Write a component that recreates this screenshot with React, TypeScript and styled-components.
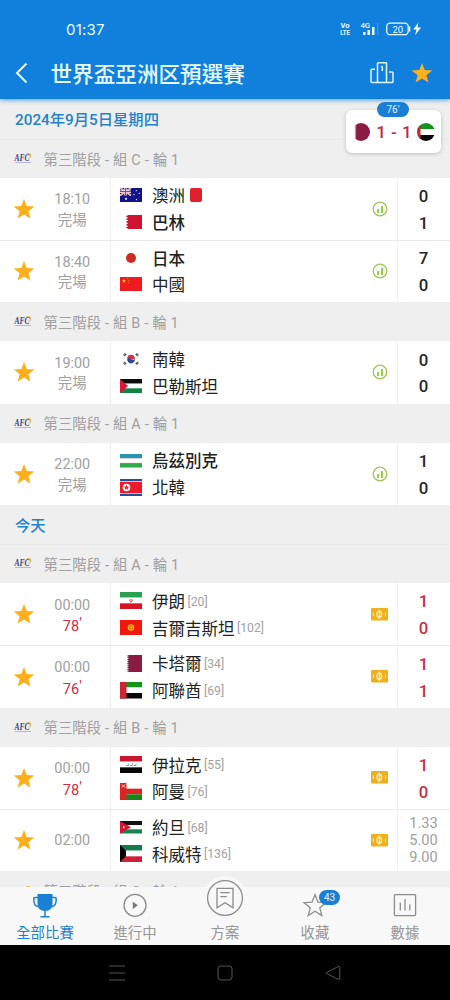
import React from "react";
import styled, { createGlobalStyle } from "styled-components";

const Global = createGlobalStyle`
  * { box-sizing: border-box; }
  body { margin: 0; background: #000; }
  svg { display: block; overflow: visible; flex: none; }
`;

const Screen = styled.div`
  position: relative;
  width: 450px;
  height: 1000px;
  display: flex;
  flex-direction: column;
  overflow: hidden;
  background: #efefef;
  font-family: Roboto, "Noto Sans CJK TC", sans-serif;
`;

const Header = styled.header`
  flex: none;
  height: 98.5px;
  display: flex;
  flex-direction: column;
  background: #1080dc;
  color: #e8fbff;
  box-shadow: 0 1px 5px rgba(16, 128, 220, 0.75);
  z-index: 1;
`;

const StatusBar = styled.div`
  height: 50px;
  padding: 8px 27px 0 66px;
  display: flex;
  align-items: center;
  justify-content: space-between;
  font: 500 15.5px Inter, sans-serif;
`;

const Clock = styled.span`
  font-size: 15px;
  font-weight: 400;
  letter-spacing: 0.2px;
`;

const TitleBar = styled.div`
  height: 48px;
  padding: 0 16px 2px 14px;
  display: flex;
  align-items: center;
`;

const Title = styled.h1`
  flex: 1;
  margin: 0 0 0 20.5px;
  font: 500 21.6px/30px "Noto Sans CJK TC", sans-serif;
  white-space: nowrap;
`;

const HeaderIcons = styled.div`
  display: flex;
  align-items: center;
  gap: 17px;
  padding-right: 1px;
`;

const List = styled.main`
  flex: none;
  height: 788.5px;
  overflow: hidden;
`;

const DateRow = styled.div<{ $h: number }>`
  height: ${(p) => p.$h}px;
  padding: 0 0 1px 15px;
  display: flex;
  align-items: center;
  border-bottom: 1px solid #e8e8e8;
  color: #2482cc;
  font-size: 15.3px;
  font-weight: 500;
`;

const GroupRow = styled.div<{ $h: number }>`
  height: ${(p) => p.$h}px;
  padding: 0 0 1px 14px;
  display: flex;
  align-items: center;
  gap: 11.5px;
  color: #a0a0a0;
  font-size: 14.4px;
  word-spacing: 0.4px;
  white-space: pre;
`;

const MatchRow = styled.div<{ $line?: boolean }>`
  height: 62.35px;
  display: flex;
  background: #fff;
  box-shadow: ${(p) => (p.$line ? "inset 0 1px 0 #e9e9e9" : "none")};
`;

const StarCell = styled.div`
  width: 48px;
  display: flex;
  align-items: center;
  justify-content: center;
`;

const TimeCell = styled.div<{ $single?: boolean }>`
  width: 62.5px;
  padding: ${(p) => (p.$single ? 1 : 4)}px 13px 0 0;
  display: flex;
  flex-direction: column;
  justify-content: center;
  align-items: center;
  border-right: 1px solid #ededed;
  color: #a0a0a0;
  font-size: 14.4px;
  line-height: 20.5px;
`;

const Live = styled.span`
  display: flex;
  color: #cf2c43;
  font-size: 14.6px;
  & > i { font-style: normal; line-height: 15px; }
`;

const Teams = styled.div`
  flex: 1;
  padding-left: 9.5px;
  display: flex;
  flex-direction: column;
  justify-content: center;
`;

const TeamLine = styled.div<{ $win?: boolean }>`
  height: 26.8px;
  display: flex;
  align-items: center;
  color: #222;
  font-size: 16.5px;
  line-height: 22px;
  font-weight: ${(p) => (p.$win ? 500 : 400)};
  white-space: nowrap;
`;

const TeamName = styled.span`
  padding-top: 4px;
`;

const FlagBox = styled.span`
  width: 22px;
  margin-right: 10px;
`;

const Rank = styled.span`
  margin-left: 2.5px;
  padding-top: 1.5px;
  color: #a2a2a2;
  font-size: 12.2px;
`;

const RedCard = styled.span`
  width: 12px;
  height: 14px;
  margin-left: 5px;
  border-radius: 2px;
  background: #e0202e;
`;

const IconCell = styled.div`
  width: 35px;
  display: flex;
  align-items: center;
  justify-content: center;
`;

const ScoreCell = styled.div<{ $live?: boolean; $odds?: boolean }>`
  width: 53px;
  padding: ${(p) => (p.$odds ? 0 : 2)}px 1px 0 0;
  display: flex;
  flex-direction: column;
  align-items: center;
  justify-content: center;
  border-left: 1px solid #f0f0f0;
  color: ${(p) => (p.$live ? "#c92f45" : p.$odds ? "#a0a0a0" : "#262626")};
  font-size: ${(p) => (p.$odds ? 14.6 : 16.8)}px;
  font-weight: ${(p) => (p.$odds ? 400 : 500)};
  line-height: ${(p) => (p.$odds ? 17 : 26.8)}px;
`;

const LiveCard = styled.aside`
  position: absolute;
  left: 346px;
  top: 110px;
  width: 95px;
  height: 43px;
  padding: 0 6px 0 7px;
  display: flex;
  align-items: center;
  justify-content: space-between;
  border-radius: 6px;
  background: #fff;
  box-shadow: 0 1px 4px rgba(0, 0, 0, 0.2);
  color: #c3273f;
  font-size: 17px;
  font-weight: 500;
  word-spacing: 1px;
  z-index: 2;
`;

const LiveBadge = styled.span`
  position: absolute;
  left: 31px;
  top: -8px;
  width: 32px;
  height: 15px;
  border-radius: 8px;
  background: #1a7fd4;
  color: #e6f4ff;
  font-size: 10px;
  font-weight: 400;
  line-height: 15px;
  text-align: center;
`;

const TabBar = styled.nav`
  flex: none;
  height: 58px;
  display: grid;
  grid-template-columns: repeat(5, 90px);
  background: #f8f8f8;
`;

const Tab = styled.div<{ $active?: boolean }>`
  position: relative;
  display: flex;
  flex-direction: column;
  align-items: center;
  padding-top: 6px;
  gap: 4.5px;
  color: ${(p) => (p.$active ? "#1a80d4" : "#979797")};
  font-size: 14.4px;
  line-height: 22px;
`;

const RaisedIcon = styled.div`
  width: 44px;
  height: 44px;
  margin: -17px 0 -2px;
  display: grid;
  place-items: center;
  border-radius: 50%;
  background: #f8f8f8;
`;

const CountBadge = styled.span`
  position: absolute;
  left: 49px;
  top: 3px;
  width: 21px;
  height: 15px;
  border-radius: 8px;
  background: #1a7fd4;
  color: #e6f4ff;
  font-size: 10px;
  line-height: 15px;
  text-align: center;
`;

const SystemBar = styled.footer`
  flex: none;
  height: 55px;
  display: flex;
  align-items: center;
  justify-content: center;
  gap: 92px;
  background: #000;
`;

const STAR = "M11 0.5l2.7 7.1 7.6.4-5.9 4.7 2 7.3L11 15.9 4.6 20l2-7.3L.7 8l7.6-.4z";

const Star = ({ size = 22 }: { size?: number }) => (
  <svg width={size} height={size} viewBox="0 0 22 21"><path d={STAR} fill="#fdb01c" /></svg>
);

const StatusIcons = () => (
  <svg width="83" height="18" viewBox="0 0 83 18" fill="none" stroke="#e8fbff">
    <g fill="#e8fbff" stroke="none" fontFamily="Roboto" fontWeight="700">
      <text x="0.5" y="7.8" fontSize="6.6" textLength="9" lengthAdjust="spacingAndGlyphs">Vo</text>
      <text x="0.3" y="14.8" fontSize="7" textLength="9.5" lengthAdjust="spacingAndGlyphs">LTE</text>
      <text x="20.5" y="8" fontSize="7.8" textLength="9.5" fontWeight="500">4G</text>
      <rect x="23" y="12" width="2.5" height="3" />
      <rect x="27.5" y="10" width="2.5" height="5" />
      <rect x="32" y="7" width="2.5" height="8" />
      <text x="52.5" y="12.5" fontSize="9.5" fontWeight="400">20</text>
      <path d="M78.3 2.5l-5 7h3.2l-1.4 5.7 6-7.6h-3.5z" />
      <path d="M69 6.5h1.3v5H69z" />
    </g>
    <path d="M37.8 3v12" opacity=".25" />
    <rect x="46.7" y="3.2" width="21.5" height="11.5" rx="3.5" strokeWidth="1.3" />
  </svg>
);

const BackIcon = () => (
  <svg width="16" height="22" viewBox="0 0 16 22" fill="none" stroke="#e8fbff" strokeWidth="2"><path d="M12.5 1.5L3 11l9.5 9.5" /></svg>
);

const PodiumIcon = () => (
  <svg width="24" height="22" viewBox="0 0 24 22" fill="none" stroke="#dff5ff" strokeWidth="1.5" strokeLinejoin="round">
    <path d="M7.5 20.5V1.5q0-.7.7-.7h7.6q.7 0 .7.7v19M5 7.3H2q-1 0-1 1v11.2q0 1 1 1h20q1 0 1-1V11q0-1-1-1h-3M11 5.2l1.3-.7v4.5" />
  </svg>
);

const AfcLogo = () => (
  <svg width="18" height="12" viewBox="0 0 18 12">
    <text x="0.5" y="9" fontFamily="Liberation Serif" fontStyle="italic" fontWeight="700" fontSize="9.5" fill="#3c3c83" textLength="15" lengthAdjust="spacingAndGlyphs">AFC</text>
    <path d="M12.7 1.7q3.7-.8 4.1 1.6.2 2.1-2.1 3.2" fill="none" stroke="#e8b95c" strokeWidth="1.2" />
    <path d="M1 10.5h16" stroke="#a9a9cf" strokeWidth=".8" />
  </svg>
);

const StatsIcon = () => (
  <svg width="16" height="16" viewBox="0 0 16 16">
    <circle cx="8" cy="8" r="6.8" fill="none" stroke="#9bc758" strokeWidth="1.3" />
    <path d="M6.1 8v4M10 5v7" stroke="#93cf3b" strokeWidth="2" />
  </svg>
);

const PitchIcon = () => (
  <svg width="17" height="13" viewBox="0 0 17 13">
    <rect width="17" height="12.5" rx="1" fill="#efb01f" />
    <ellipse cx="8.3" cy="6.3" rx="2.3" ry="3.1" fill="none" stroke="#fff3c9" strokeWidth="1.3" />
    <path d="M8.3 1.6v9.4M2.3 4.5v3.6M14.5 4.5v3.6" stroke="#fff3c9" strokeWidth="1" />
  </svg>
);

const starPath = (cx: number, cy: number, r: number) =>
  "M" + Array.from({ length: 10 }, (_, i) => {
    const a = -Math.PI / 2 + (i * Math.PI) / 5;
    const q = i % 2 ? r * 0.42 : r;
    return `${(cx + q * Math.cos(a)).toFixed(2)} ${(cy + q * Math.sin(a)).toFixed(2)}`;
  }).join("L") + "z";

const bands = (colors: string[], h: number) =>
  colors.map((c, i) => <rect key={i} y={(h / colors.length) * i} width="22" height={h / colors.length} fill={c} />);

const serrated = (x: number, h: number, n: number) => {
  let d = `M22 0H${x}`;
  for (let i = 0; i < n; i++) d += `L${x - 2.3} ${(h / n) * (i + 0.5)}L${x} ${(h / n) * (i + 1)}`;
  return d + "H22z";
};

const flags: Record<string, { h: number; art: React.ReactNode }> = {
  au: { h: 14, art: <>
    <rect width="22" height="14" fill="#12128c" />
    <path d="M0 0l11 7.5M11 0L0 7.5" stroke="#fff" strokeWidth="1.6" />
    <path d="M0 0l11 7.5M11 0L0 7.5" stroke="#d8304a" strokeWidth=".6" />
    <path d="M5.5 0v7.5M0 3.7h11" stroke="#fff" strokeWidth="2.4" />
    <path d="M5.5 0v7.5M0 3.7h11" stroke="#d8304a" strokeWidth="1.3" />
    <path d={starPath(6, 10.8, 1.7) + starPath(16.3, 2.7, 1) + starPath(19.3, 5.3, 1) + starPath(14, 6.5, 1) + starPath(16.5, 11.5, 1.1)} fill="#fff" />
  </> },
  bh: { h: 14, art: <path d={serrated(8.2, 14, 5)} fill="#cf1430" /> },
  jp: { h: 14, art: <circle cx="11" cy="7" r="5" fill="#d02b22" /> },
  cn: { h: 14, art: <>
    <rect width="22" height="14" fill="#ee1c20" />
    <path d={starPath(4, 4, 2.2) + starPath(7.8, 1.7, 0.8) + starPath(9, 3.5, 0.8) + starPath(8.5, 5.7, 0.8)} fill="#ffc928" />
  </> },
  kr: { h: 14, art: <>
    <path d="M7.3 7a3.8 3.8 0 0 1 7.4 0z" fill="#d13144" />
    <path d="M7.3 7a3.8 3.8 0 1 0 7.5 0q-2 2-3.8 0T7.3 7z" fill="#244b9b" />
    <path d="M7.2 6.6a3.8 3.8 0 0 1 7.6 0q-2 2-3.8.4t-3.8-.4z" fill="#d13144" />
    <path d="M4 3.8l2-2.4M18 3.8l-2-2.4M4 10.2l2 2.4M18 10.2l-2 2.4" stroke="#444" strokeWidth="2.4" strokeDasharray="1.1 .4" />
  </> },
  ps: { h: 14, art: <>{bands(["#0c0c0c", "#fff", "#118344"], 14)}<path d="M0 0l8 7-8 7z" fill="#d81738" /></> },
  uz: { h: 13.5, art: <>
    <rect width="22" height="4.3" fill="#2795af" /><rect y="9" width="22" height="4.5" fill="#2eaa4a" />
    <path d="M0 4.5h22M0 8.8h22" stroke="#f2c8cc" strokeWidth=".5" />
  </> },
  kp: { h: 17, art: <>
    <rect width="22" height="17" fill="#264f9b" /><rect y="2.3" width="22" height="12.4" fill="#fff" />
    <rect y="3" width="22" height="11" fill="#ed1c2a" /><circle cx="6.5" cy="8.5" r="3.8" fill="#fff" />
    <path d={starPath(6.5, 8.6, 3)} fill="#ed1c2a" />
  </> },
  ir: { h: 17, art: <>{bands(["#2ba052", "#fff", "#d71526"], 17)}<path d="M11 6.8v3.7M9.7 7.3q-.8 2 1.3 2.8 2.1-.8 1.3-2.8" fill="none" stroke="#db4653" strokeWidth=".8" /></> },
  kg: { h: 15, art: <>
    <rect width="22" height="15" fill="#ef1910" /><circle cx="11" cy="7.5" r="3.3" fill="#f6b50f" />
    <circle cx="11" cy="7.5" r="1.5" fill="none" stroke="#e24c15" strokeWidth=".8" />
  </> },
  qa: { h: 17, art: <path d={serrated(9, 17, 9)} fill="#8a1c43" /> },
  ae: { h: 16.5, art: <>{bands(["#13931b", "#fff", "#080808"], 16.5)}<rect width="6.5" height="16.5" fill="#cb2634" /></> },
  iq: { h: 17, art: <>{bands(["#c9162c", "#fff", "#080808"], 17)}<path d="M6 9.5h2.7V7.7M10 9.5h2.3V7.3M13.5 9.5H16V7.7" stroke="#57a77b" strokeWidth=".9" fill="none" /></> },
  om: { h: 17, art: <>
    {bands(["#fff", "#dd2424", "#16861a"], 17)}<rect width="6.5" height="17" fill="#dd2424" />
    <path d="M2 1.5l3 3M5 1.5l-3 3" stroke="#fff" strokeWidth=".8" />
  </> },
  jo: { h: 12.5, art: <>{bands(["#111", "#fff", "#188450"], 12.5)}<path d="M0 0l11 6.25L0 12.5z" fill="#cf1632" /><circle cx="3.7" cy="6.25" r=".9" fill="#fff" /></> },
  kw: { h: 17, art: <>{bands(["#167a50", "#fff", "#cf2036"], 17)}<path d="M0 0l6 5.67v5.66L0 17z" fill="#080808" /></> },
};

const Flag = ({ code }: { code: string }) => (
  <FlagBox><svg width="22" height={flags[code].h} viewBox={`0 0 22 ${flags[code].h}`}>{flags[code].art}</svg></FlagBox>
);

type Team = { flag: string; name: string; rank?: number; win?: boolean; red?: boolean };
type Match = { time: string; minute?: string; ended?: boolean; teams: [Team, Team]; values: string[] };
type Section = { date?: string; dateHeight?: number; group: string; height: number; matches: Match[] };

const sections: Section[] = [
  { date: "2024年9月5日星期四", dateHeight: 41.5, group: "C", height: 37.5, matches: [
    { time: "18:10", ended: true, teams: [{ flag: "au", name: "澳洲", red: true }, { flag: "bh", name: "巴林", win: true }], values: ["0", "1"] },
    { time: "18:40", ended: true, teams: [{ flag: "jp", name: "日本", win: true }, { flag: "cn", name: "中國" }], values: ["7", "0"] },
  ] },
  { group: "B", height: 39, matches: [
    { time: "19:00", ended: true, teams: [{ flag: "kr", name: "南韓" }, { flag: "ps", name: "巴勒斯坦" }], values: ["0", "0"] },
  ] },
  { group: "A", height: 39, matches: [
    { time: "22:00", ended: true, teams: [{ flag: "uz", name: "烏茲別克", win: true }, { flag: "kp", name: "北韓" }], values: ["1", "0"] },
  ] },
  { date: "今天", dateHeight: 40, group: "A", height: 38.2, matches: [
    { time: "00:00", minute: "78", teams: [{ flag: "ir", name: "伊朗", rank: 20 }, { flag: "kg", name: "吉爾吉斯坦", rank: 102 }], values: ["1", "0"] },
    { time: "00:00", minute: "76", teams: [{ flag: "qa", name: "卡塔爾", rank: 34 }, { flag: "ae", name: "阿聯酋", rank: 69 }], values: ["1", "1"] },
  ] },
  { group: "B", height: 39, matches: [
    { time: "00:00", minute: "78", teams: [{ flag: "iq", name: "伊拉克", rank: 55 }, { flag: "om", name: "阿曼", rank: 76 }], values: ["1", "0"] },
    { time: "02:00", teams: [{ flag: "jo", name: "約旦", rank: 68 }, { flag: "kw", name: "科威特", rank: 136 }], values: ["1.33", "5.00", "9.00"] },
  ] },
  { group: "C", height: 40, matches: [] },
];

const MatchItem = ({ match, line }: { match: Match; line: boolean }) => (
  <MatchRow $line={line}>
    <StarCell><Star /></StarCell>
    <TimeCell $single={!match.ended && !match.minute}>
      <span>{match.time}</span>
      {match.ended && <span>完場</span>}
      {match.minute && <Live>{match.minute}<i>'</i></Live>}
    </TimeCell>
    <Teams>
      {match.teams.map((t) => (
        <TeamLine key={t.name} $win={t.win}>
          <Flag code={t.flag} />
          <TeamName>{t.name}</TeamName>
          {t.rank && <Rank>[{t.rank}]</Rank>}
          {t.red && <RedCard />}
        </TeamLine>
      ))}
    </Teams>
    <IconCell>{match.ended ? <StatsIcon /> : <PitchIcon />}</IconCell>
    <ScoreCell $live={!!match.minute} $odds={match.values.length > 2}>
      {match.values.map((v, i) => <span key={i}>{v}</span>)}
    </ScoreCell>
  </MatchRow>
);

const line = { fill: "none", stroke: "#8c8c8c", strokeWidth: 1.3 } as const;

const TrophyIcon = () => (
  <svg width="24" height="25" viewBox="0 0 24 25" fill="none" stroke="#1a80d4" strokeWidth="1.5">
    <path d="M4.5 1h15v10q0 6.5-7.5 7-7.5-.5-7.5-7z" fill="#1a80d4" stroke="none" />
    <path d="M5 4.5H2.2Q.7 4.5.8 6q-.2 7 4.2 7.5M19 4.5h2.8q1.5 0 1.4 1.5.2 7-4.2 7.5M12 18v5.5M7.5 23.7h9" />
  </svg>
);
const PlayIcon = () => (
  <svg width="24" height="25" viewBox="0 0 24 25" {...line}><circle cx="12" cy="12.3" r="11" /><path d="M9.8 8.7v7.2l5-3.6z" fill="#777" stroke="none" /></svg>
);
const PlanIcon = () => (
  <svg width="38" height="38" viewBox="0 0 38 38" {...line}><circle cx="19" cy="19" r="17.4" /><path d="M11 9.3h16v19.5l-8-5-8 5zM14.3 13.7h9.4M14.3 17.7h6.5" /></svg>
);
const FavIcon = () => (
  <svg width="24" height="25" viewBox="0 0 24 25" {...line}><path d="M12 1.8l3 7.4 7.9.5-6.1 5.1 2 7.7-6.8-4.2-6.8 4.2 2-7.7-6.1-5.1 7.9-.5z" /></svg>
);
const DataIcon = () => (
  <svg width="24" height="25" viewBox="0 0 24 25" {...line}><rect x="1.4" y="1.6" width="21.2" height="21" rx="1" /><path d="M7.3 9.5v8M12 6v11.5M16.8 11.5v6" /></svg>
);

export default function App() {
  return (
    <Screen>
      <Global />
      <Header>
        <StatusBar><Clock>01:37</Clock><StatusIcons /></StatusBar>
        <TitleBar>
          <BackIcon />
          <Title>世界盃亞洲区預選賽</Title>
          <HeaderIcons><PodiumIcon /><Star /></HeaderIcons>
        </TitleBar>
      </Header>
      <List>
        {sections.map((s, i) => (
          <React.Fragment key={i}>
            {s.date && <DateRow $h={s.dateHeight!}>{s.date}</DateRow>}
            <GroupRow $h={s.height}><AfcLogo />第三階段 - 組 {s.group} - 輪 1</GroupRow>
            {s.matches.map((m, j) => <MatchItem key={j} match={m} line={j > 0} />)}
          </React.Fragment>
        ))}
      </List>
      <LiveCard>
        <LiveBadge>76'</LiveBadge>
        <svg width="18" height="18" viewBox="0 0 18 18">
          <clipPath id="left-crest"><circle cx="8" cy="9" r="9" /></clipPath>
          <path clipPath="url(#left-crest)" d="M18 0H3.5L1.5 1l2 1-2 1 2 1-2 1 2 1-2 1 2 1-2 1 2 1-2 1 2 1-2 1 2 1-2 1 2 1-2 1 2 1H18z" fill="#8a1c43" />
        </svg>
        <span>1 - 1</span>
        <svg width="18" height="18" viewBox="0 0 18 18">
          <clipPath id="right-crest"><circle cx="9" cy="9" r="9" /></clipPath>
          <g clipPath="url(#right-crest)">
            <rect width="18" height="18" fill="#fff" />
            <rect width="18" height="6" fill="#13931b" /><rect y="12" width="18" height="6" fill="#080808" />
            <rect width="3.5" height="18" fill="#cb2634" />
          </g>
        </svg>
      </LiveCard>
      <TabBar>
        <Tab $active><TrophyIcon />全部比賽</Tab>
        <Tab><PlayIcon />進行中</Tab>
        <Tab><RaisedIcon><PlanIcon /></RaisedIcon>方案</Tab>
        <Tab><FavIcon />收藏<CountBadge>43</CountBadge></Tab>
        <Tab><DataIcon />數據</Tab>
      </TabBar>
      <SystemBar>
        <svg width="16" height="16" viewBox="0 0 16 16" fill="none" stroke="#555"><path d="M0 1h16M0 8h16M0 15h16" /></svg>
        <svg width="16" height="16" viewBox="0 0 16 16" fill="none" stroke="#555"><rect x="1" y="1" width="14" height="14" rx="3" /></svg>
        <svg width="16" height="16" viewBox="0 0 16 16" fill="none" stroke="#555"><path d="M14.8 2v12q0 1-1 .6L1.5 8.5q-.7-.5 0-1L13.8 1.3q1-.3 1 .7z" /></svg>
      </SystemBar>
    </Screen>
  );
}
